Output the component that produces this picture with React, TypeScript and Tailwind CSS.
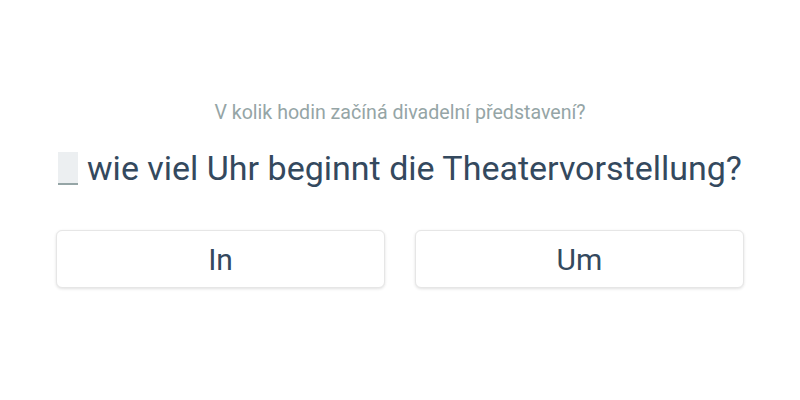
export default function App() {
  const options = ['In', 'Um']
  return (
    <div className="w-[800px] h-[400px] bg-white flex flex-col items-center" style={{ fontFamily: 'Roboto, sans-serif' }}>
      <div className="mt-[100px] text-[19.6px] leading-[26px] text-[#95a5a6]">
        V kolik hodin začíná divadelní představení?
      </div>
      <div className="mt-[19px] flex items-center text-[34px] leading-[46px] text-[#34495e]">
        <span className="inline-block w-[20px] h-[33px] bg-[#eceff1] border-b-2 border-[#95a5a6] mr-[9px] mt-[1px]" />
        <span>wie viel Uhr beginnt die Theatervorstellung?</span>
      </div>
      <div className="mt-[39px] w-[688px] grid grid-cols-2 gap-[30px]">
        {options.map(o => (
          <button
            key={o}
            className="h-[58px] rounded-[6px] bg-white border border-[#e6e6e6] shadow-[0_1px_3px_rgba(0,0,0,0.12)] text-[30px] text-[#34495e]"
          >
            {o}
          </button>
        ))}
      </div>
    </div>
  )
}
